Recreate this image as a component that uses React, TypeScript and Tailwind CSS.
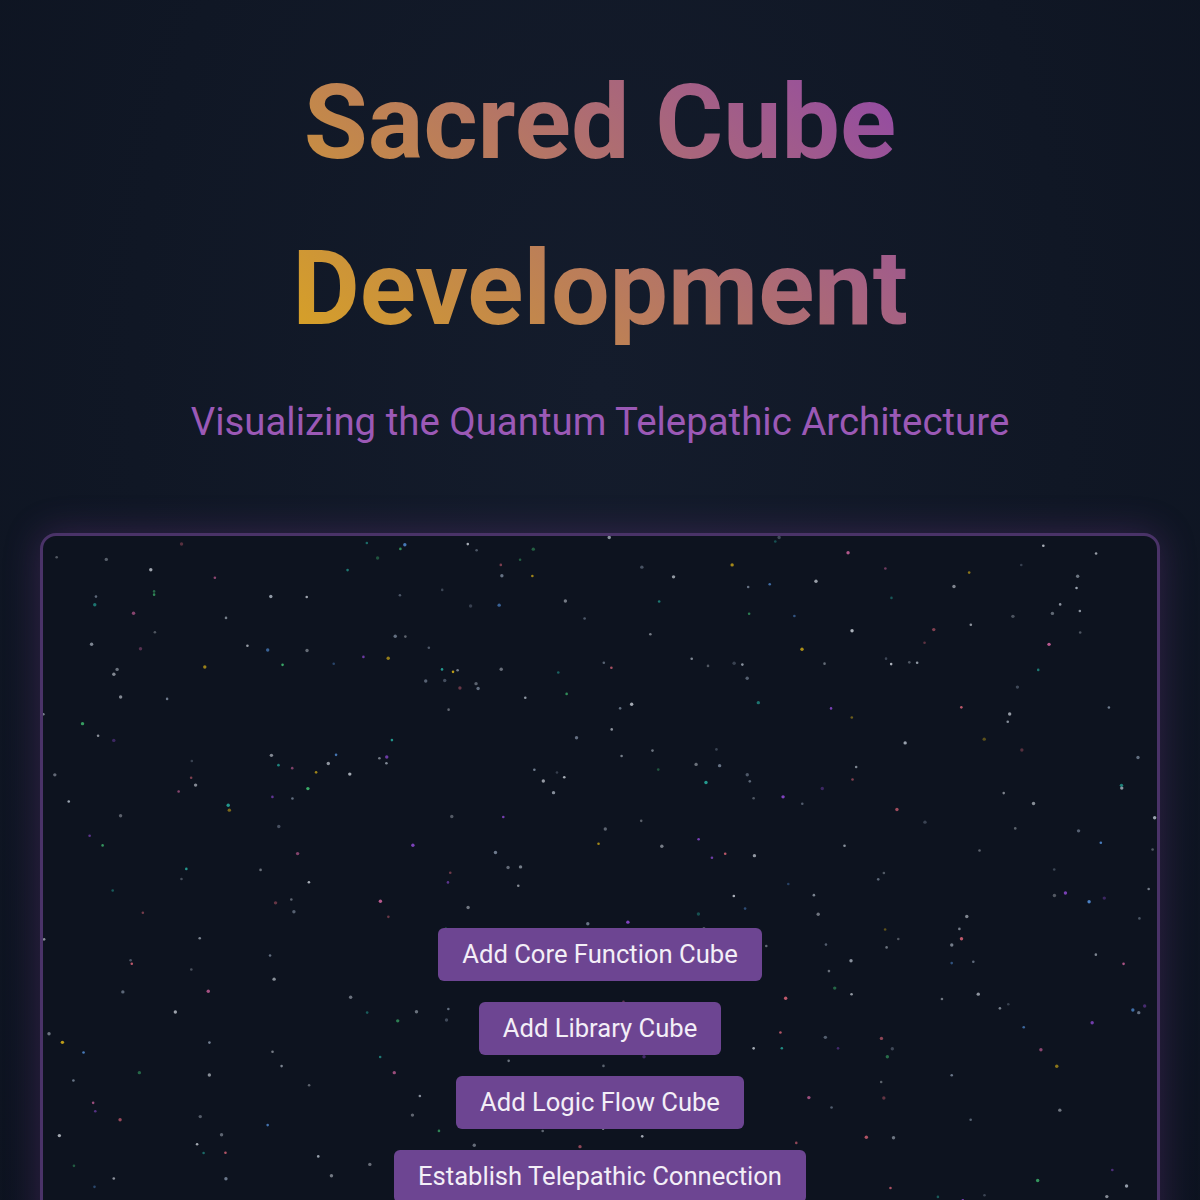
import React, { useMemo } from "react";

type Star = { x: number; y: number; r: number; c: string; o: number };

const STAR_COLORS = ["#cbd5e1", "#e2e8f0", "#94a3b8", "#f472b6", "#a855f7", "#4ade80", "#facc15", "#60a5fa", "#2dd4bf", "#fb7185"];

function makeStars(count: number, w: number, h: number): Star[] {
  let seed = 1337;
  const rand = () => {
    seed = (seed * 16807) % 2147483647;
    return (seed - 1) / 2147483646;
  };
  const stars: Star[] = [];
  for (let i = 0; i < count; i++) {
    const pick = rand();
    stars.push({
      x: rand() * w,
      y: rand() * h,
      r: rand() > 0.6 ? 1.7 : 1.3,
      c: pick < 0.6 ? STAR_COLORS[Math.floor(rand() * 3)] : STAR_COLORS[3 + Math.floor(rand() * 7)],
      o: 0.3 + rand() * 0.45,
    });
  }
  return stars;
}

function StarField() {
  const stars = useMemo(() => makeStars(420, 1114, 760), []);
  return (
    <svg className="absolute inset-0 h-full w-full" viewBox="0 0 1114 760" preserveAspectRatio="xMinYMin slice">
      {stars.map((s, i) => (
        <circle key={i} cx={s.x} cy={s.y} r={s.r} fill={s.c} opacity={s.o} />
      ))}
    </svg>
  );
}

const actions = [
  "Add Core Function Cube",
  "Add Library Cube",
  "Add Logic Flow Cube",
  "Establish Telepathic Connection",
];

export default function App() {
  return (
    <div
      className="min-h-screen overflow-hidden bg-[radial-gradient(ellipse_at_50%_30%,#141c2c_0%,#101725_55%,#0d1320_100%)] px-10 text-center"
      style={{ fontFamily: "Roboto, 'Noto Sans', sans-serif" }}
    >
      <header className="pt-10">
        <h1 className="mx-auto max-w-[620px] bg-[linear-gradient(45deg,#daa520,#8e44ad)] bg-clip-text text-[104px] font-bold leading-[1.6] text-transparent">
          Sacred Cube Development
        </h1>
        <p className="mt-[29px] text-[38.4px] leading-10 text-[#9b59b6]">Visualizing the Quantum Telepathic Architecture</p>
      </header>

      <section className="relative mt-[91px] h-[760px] overflow-hidden rounded-2xl border-[3px] border-[#4a3368] bg-[#0d131f] shadow-[0_0_36px_rgba(142,68,173,0.28)]">
        <StarField />
        <div className="relative flex flex-col items-center gap-[21px] pt-[392px]">
          {actions.map((label) => (
            <button
              key={label}
              className="rounded-md bg-[#6d4592] px-6 py-[10.5px] text-[25.6px] leading-8 text-[#f3eef7]"
            >
              {label}
            </button>
          ))}
        </div>
      </section>
    </div>
  );
}
